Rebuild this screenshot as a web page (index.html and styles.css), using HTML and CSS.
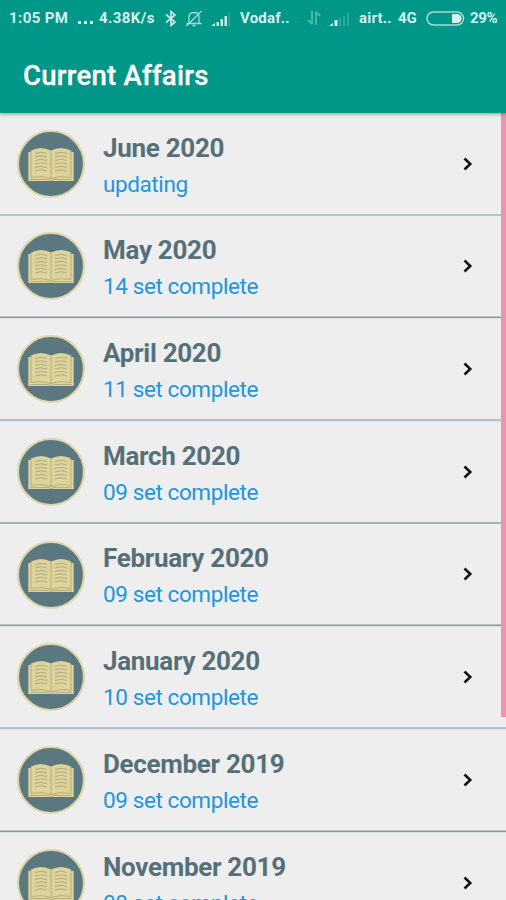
FILE: index.html
```html
<!DOCTYPE html>
<html lang="en">
<head>
<meta charset="utf-8">
<title>Current Affairs</title>
<link rel="stylesheet" href="styles.css">
</head>
<body>
<svg class="defs" width="0" height="0">
  <symbol id="book" viewBox="0 0 70 70">
    <circle cx="35" cy="35" r="33" fill="#5b7880" stroke="#ddd6a8" stroke-width="2.200"/>
    <path d="M12.300 23H57.700V52H12.300Z" fill="#ddd39b"/>
    <path d="M15 21.500Q25 16.500 35 21.500Q45 16.500 55 21.500V48.500Q45 46 35 49.500Q25 46 15 48.500Z" fill="#ddd39b"/>
    <path d="M15 22V48.500Q25 46 35 49.500Q45 46 55 48.500V22M35 21.500V49.500M14 50.500H32L35 51.500L38 50.500H56" fill="none" stroke="#b0ad80" stroke-width=".9"/>
    <path d="M19 24.500Q25 22 31 24.500M19 28Q25 25.500 31 28M19 31.500Q25 29 31 31.500M19 35Q25 32.500 31 35M19 38.500Q25 36 31 38.500M19 42Q25 39.500 31 42M39 24.500Q45 22 51 24.500M39 28Q45 25.500 51 28M39 31.500Q45 29 51 31.500M39 35Q45 32.500 51 35M39 38.500Q45 36 51 38.500M39 42Q45 39.500 51 42" fill="none" stroke="#b0ad84" stroke-width="1"/>
  </symbol>
  <symbol id="chevron" viewBox="0 0 10 14">
    <path d="M1.500 1.500L7.300 7L1.500 12.500" fill="none" stroke="#111" stroke-width="2.500"/>
  </symbol>
</svg>
<header class="top">
  <div class="status">
    <span class="time">1:05 PM</span>
    <span class="dots"><i></i><i></i><i></i></span>
    <span class="speed">4.38K/s</span>
    <svg class="bt" width="12" height="17" viewBox="0 0 12 17"><path d="M1 4.500L10 12L6 15.500V1.500L10 5L1 12.500" fill="none" stroke="#c5eae4" stroke-width="1.700"/></svg>
    <svg class="bell" width="16" height="17" viewBox="0 0 16 17"><path d="M3 12.500V7Q3 2.500 8 2.500T13 7V12.500L14.500 13.500H1.500ZM6.500 15.500H9.500M.500 16L15.500 1" fill="none" stroke="#a3dcd3" stroke-width="1.300"/></svg>
    <svg class="sig1" width="20" height="14" viewBox="0 0 20 14"><path d="M0 13L4 10V13ZM5.500 9H8V13H5.500ZM9.500 6H12V13H9.500ZM13.500 3H16V13H13.500Z" fill="#c5eae4"/><path d="M17.500 0H19V13H17.500Z" fill="#34aa9e"/></svg>
    <span class="carrier">Vodaf..</span>
    <svg class="arrows" width="14" height="14" viewBox="0 0 14 14"><path d="M5 0V13M5 13L1 9M9 14V1M9 1L13 5" fill="none" stroke="#4db6a9" stroke-width="2"/></svg>
    <svg class="sig2" width="21" height="14" viewBox="0 0 21 14"><path d="M0 13L4 10V13ZM5.500 7H8.500V13H5.500Z" fill="#d2f0eb"/><path d="M10 5H12V13H10ZM14 3H16V13H14ZM18 0H20V13H18Z" fill="#30a99c"/></svg>
    <span class="carrier2">airt..</span>
    <span class="net">4G</span>
    <svg class="battery" width="39" height="15" viewBox="0 0 39 15"><rect x="1" y="1" width="36.500" height="13" rx="6.500" fill="none" stroke="#a3dcd3" stroke-width="1.500"/><path d="M26 3H31A4.500 4.500 0 0 1 31 12H26Z" fill="#d8f3ee"/></svg>
    <span class="pct">29%</span>
  </div>
  <h1>Current Affairs</h1>
</header>
<main class="list">
  <section class="row soft"><svg class="book"><use href="#book"/></svg><div class="text"><h2>June 2020</h2><p>updating</p></div><svg class="chev"><use href="#chevron"/></svg></section>
  <section class="row sharp"><svg class="book"><use href="#book"/></svg><div class="text"><h2>May 2020</h2><p>14 set complete</p></div><svg class="chev"><use href="#chevron"/></svg></section>
  <section class="row cool"><svg class="book"><use href="#book"/></svg><div class="text"><h2>April 2020</h2><p>11 set complete</p></div><svg class="chev"><use href="#chevron"/></svg></section>
  <section class="row"><svg class="book"><use href="#book"/></svg><div class="text"><h2>March 2020</h2><p>09 set complete</p></div><svg class="chev"><use href="#chevron"/></svg></section>
  <section class="row sharp"><svg class="book"><use href="#book"/></svg><div class="text"><h2>February 2020</h2><p>09 set complete</p></div><svg class="chev"><use href="#chevron"/></svg></section>
  <section class="row cool"><svg class="book"><use href="#book"/></svg><div class="text"><h2>January 2020</h2><p>10 set complete</p></div><svg class="chev"><use href="#chevron"/></svg></section>
  <section class="row sharp"><svg class="book"><use href="#book"/></svg><div class="text"><h2>December 2019</h2><p>09 set complete</p></div><svg class="chev"><use href="#chevron"/></svg></section>
  <section class="row"><svg class="book"><use href="#book"/></svg><div class="text"><h2>November 2019</h2><p>08 set complete</p></div><svg class="chev"><use href="#chevron"/></svg></section>
  <div class="scrollbar"></div>
</main>
</body>
</html>
```
FILE: styles.css
```css
* { box-sizing: border-box; }
body { margin: 0; height: 900px; overflow: hidden; background: #eee; font-family: Roboto, sans-serif; display: flex; flex-direction: column; }
h1, h2, p { margin: 0; white-space: nowrap; }
.defs { display: none; }
.top { height: 113px; flex: none; background: #009688; box-shadow: 0 1px 4px rgba(0,0,0,.4); position: relative; z-index: 1; }
.status { height: 36px; display: flex; align-items: center; padding-left: 9px; color: #d5f1ed; font-size: 15px; font-weight: 700; white-space: nowrap; }
.status > * { flex: none; }
.time { width: 69px; letter-spacing: .4px; }
.dots { width: 21px; display: flex; gap: 3px; padding-top: 9px; }
.dots i { width: 3px; height: 3px; background: #d5f1ed; }
.speed { width: 66px; letter-spacing: .4px; }
.bell { margin-left: 9px; }
.sig1 { margin: 3px 9px 0 9px; }
.carrier { width: 67px; letter-spacing: .2px; }
.sig2 { margin: 3px 9px 0 8px; }
.carrier2 { width: 39px; letter-spacing: .2px; }
.net { width: 28px; }
.battery { margin-right: 5px; }
.pct { letter-spacing: -.3px; }
h1 { padding-left: 23px; height: 78px; line-height: 79px; font-size: 27.5px; font-weight: 500; letter-spacing: .25px; color: #fff; -webkit-text-stroke: .3px #fff; }
.list { position: relative; flex: none; }
.row { height: 102.7px; display: flex; align-items: flex-start; border-bottom: 2px solid #a5b5b2; padding-left: 16px; }
.row.soft { border-bottom-color: #b5c7c6; }
.row.sharp { border-bottom-color: #8b9b98; }
.row.sharp { border-bottom-width: 1px; padding-bottom: 1px; box-shadow: 0 1px 0 #dde3e2, inset 0 -1px 0 #b9c4c2; }
.row.cool { border-bottom-color: #b5c1cd; box-shadow: 0 1px 0 #dce3e9; }
.book { width: 70px; height: 70px; margin-top: 15.8px; flex: none; }
.text { width: 360px; margin-left: 17px; padding-top: 17.700px; }
h2 { font-size: 26px; line-height: 34px; font-weight: 700; letter-spacing: -.3px; color: #56707a; }
p { margin-top: 4px; font-size: 22.5px; line-height: 30px; letter-spacing: -.4px; color: #2196dc; }
.chev { width: 10px; height: 14px; margin-top: 43.7px; }
.scrollbar { position: absolute; right: 0; top: 0; width: 5px; height: 604px; background: #f292b2; }
```
